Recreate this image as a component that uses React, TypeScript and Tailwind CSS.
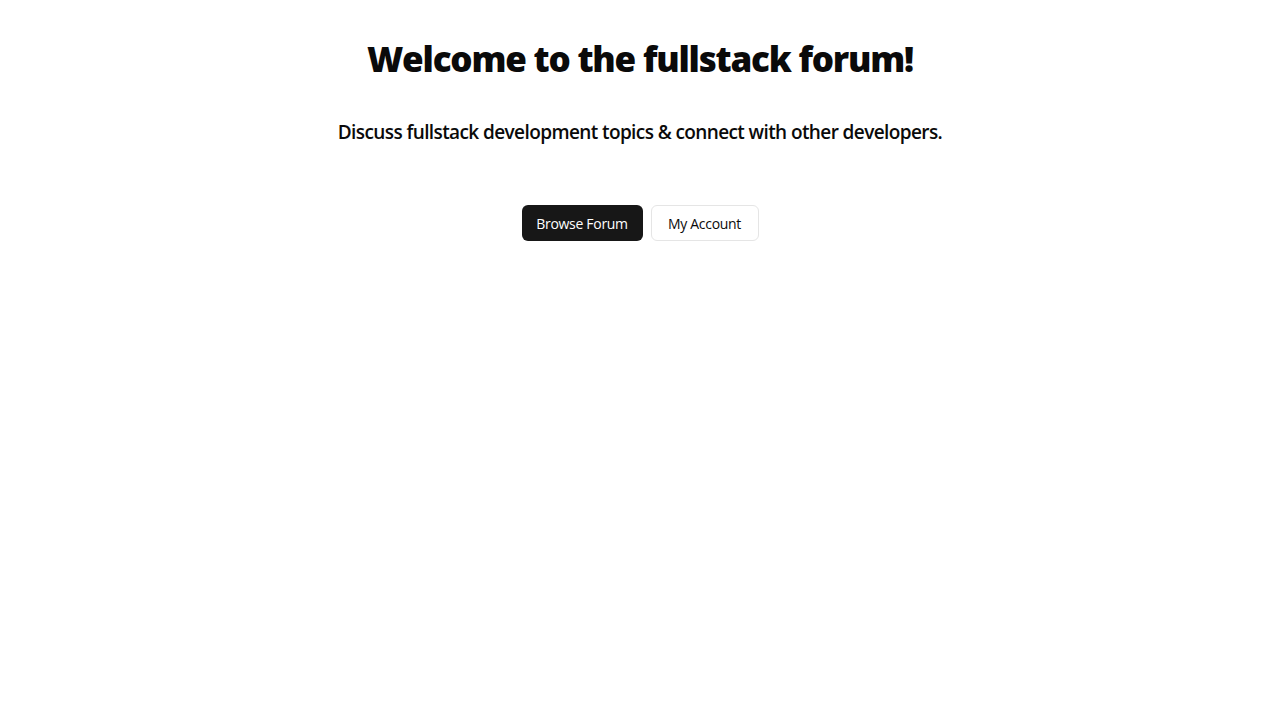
import React from "react";

export default function App() {
  return (
    <main
      className="min-h-screen bg-white text-[#0a0a0a] flex flex-col items-center pt-[36px]"
      style={{ fontFamily: '"Open Sans", "Noto Sans", sans-serif' }}
    >
      <h1 className="text-[35px] leading-[46px] font-extrabold tracking-[-1.2px]">
        Welcome to the fullstack forum!
      </h1>
      <p className="mt-[36px] text-[19px] leading-[28px] font-semibold tracking-[-0.6px]">
        Discuss fullstack development topics &amp; connect with other developers.
      </p>
      <div className="mt-[59px] flex gap-2">
        <button className="h-9 w-[121px] rounded-md bg-[#171717] pt-px text-white text-sm tracking-[-0.3px]">
          Browse Forum
        </button>
        <button className="h-9 w-[108px] rounded-md border border-[#e5e5e5] bg-white pt-px text-sm text-[#0a0a0a] tracking-[-0.3px]">
          My Account
        </button>
      </div>
    </main>
  );
}
